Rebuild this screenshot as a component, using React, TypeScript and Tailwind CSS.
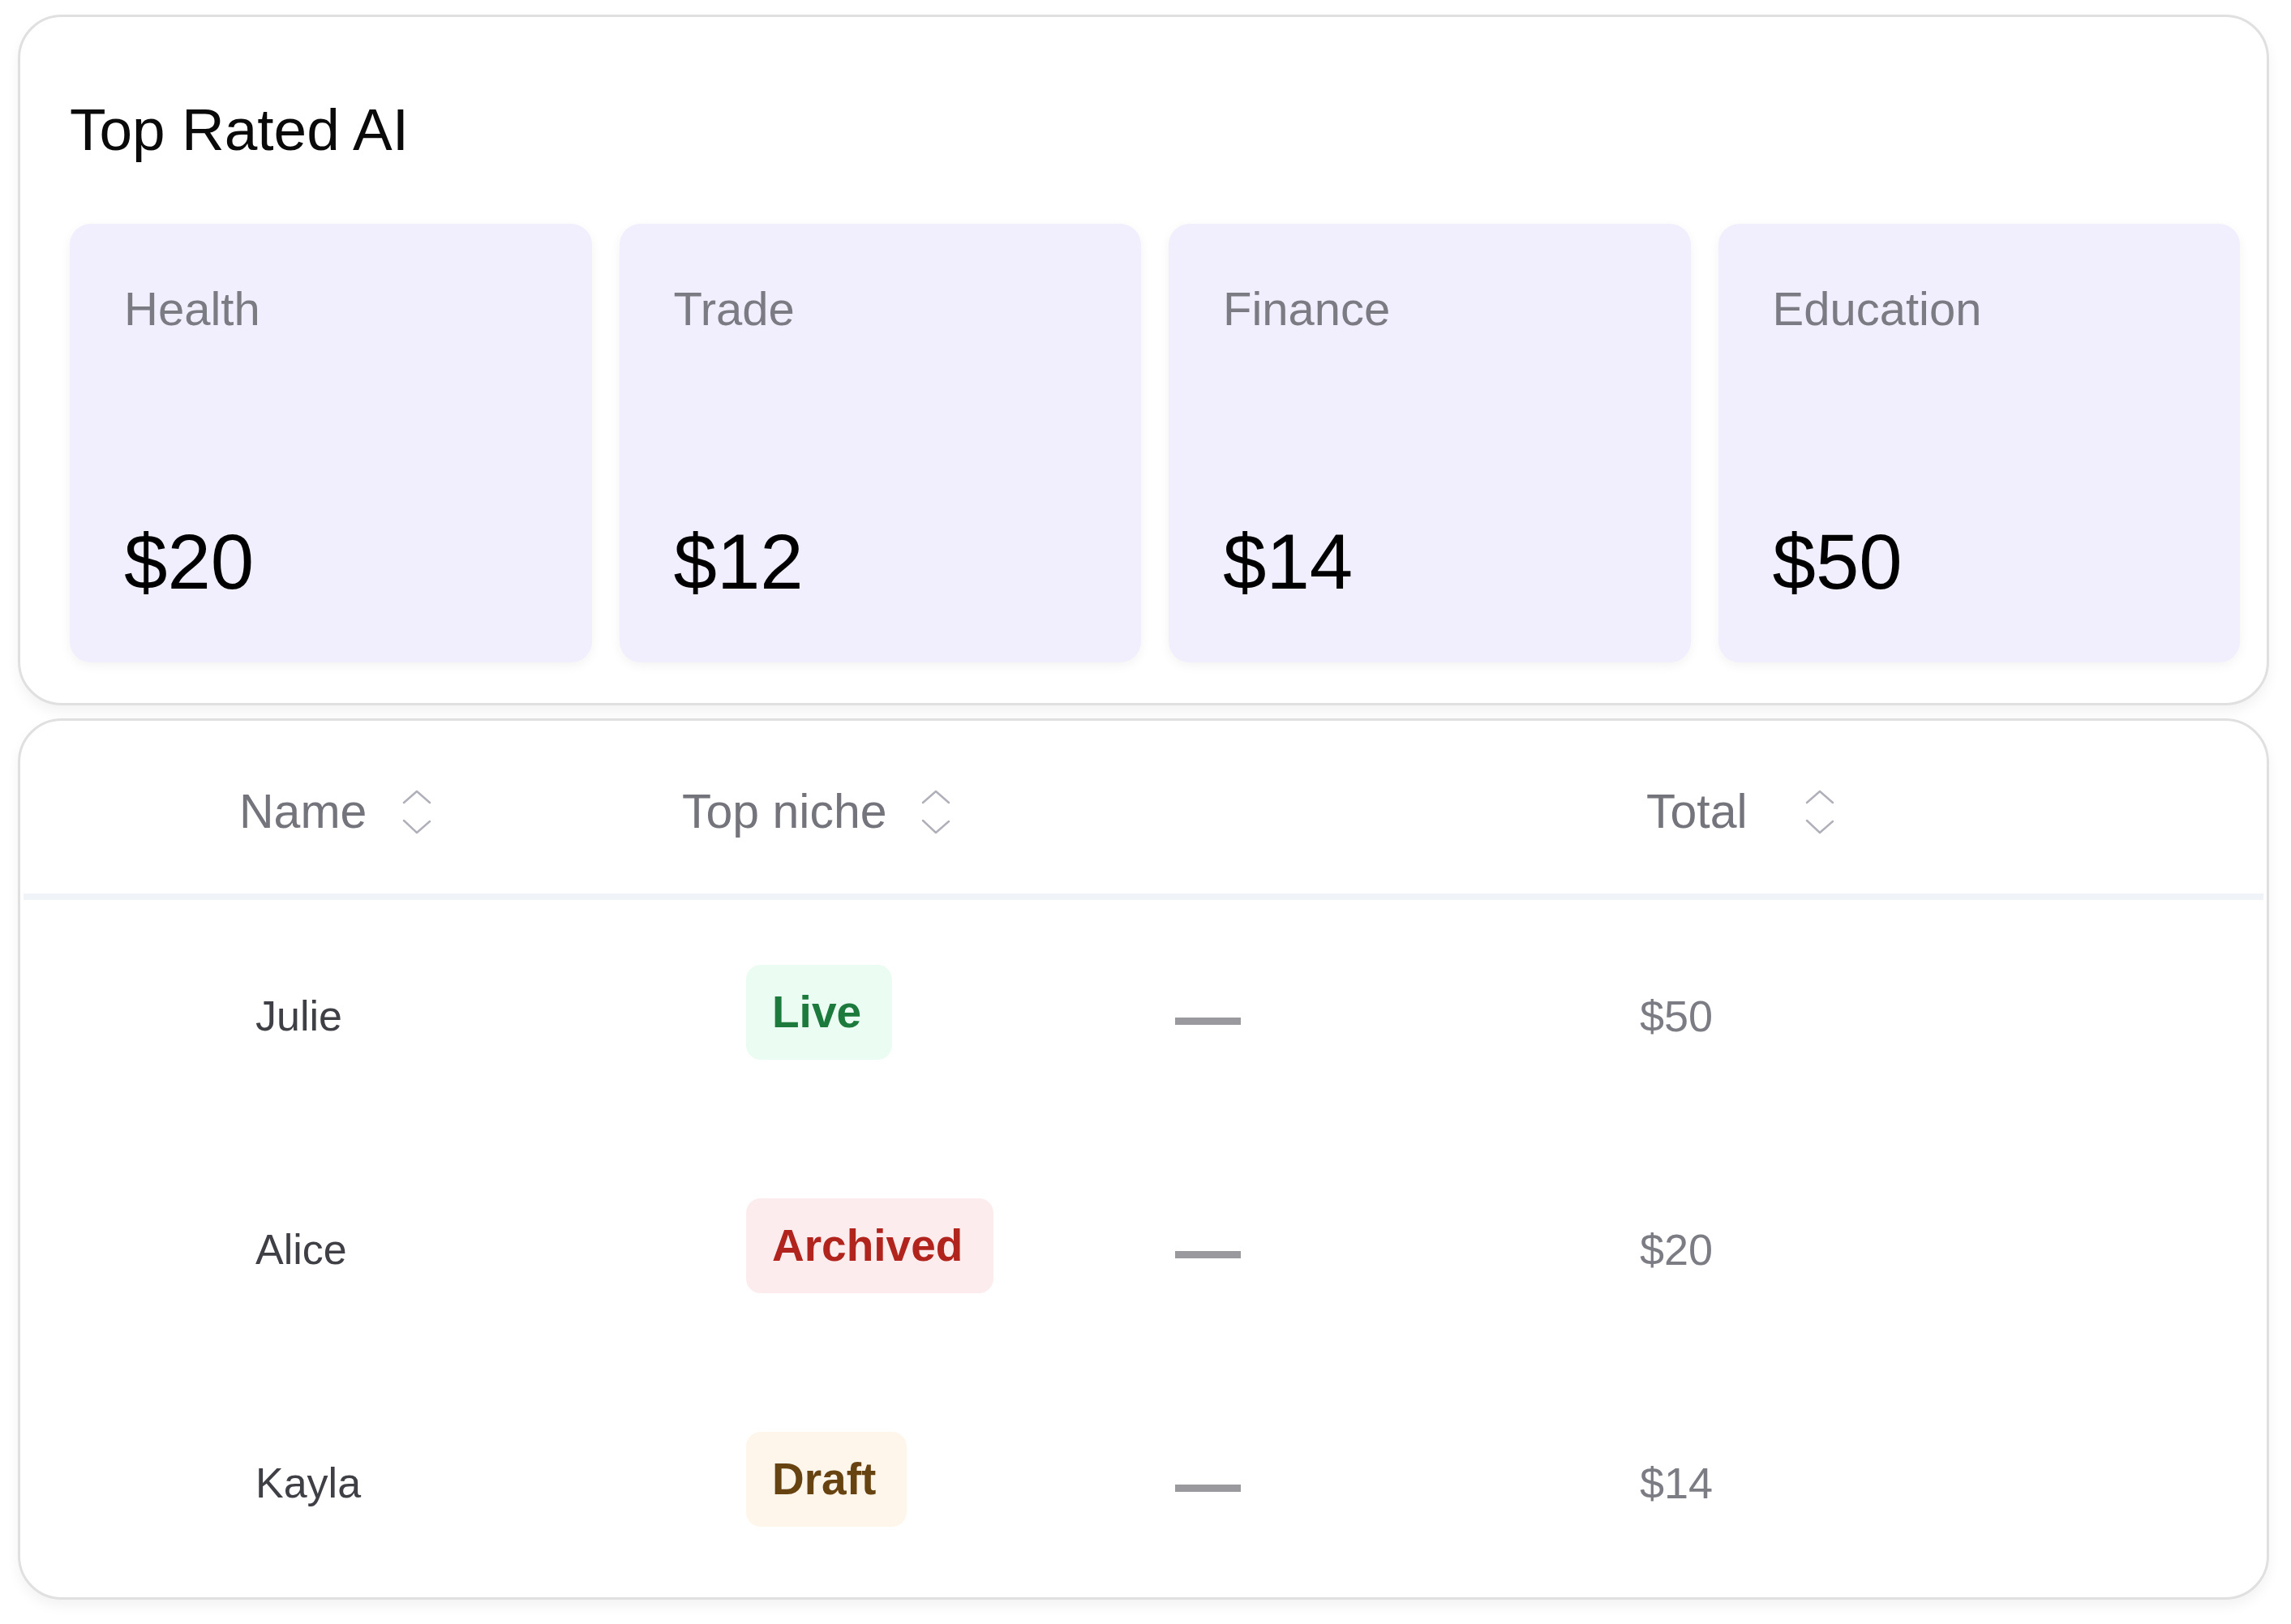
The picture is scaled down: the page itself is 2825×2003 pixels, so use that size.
import React from "react";

type Niche = { label: string; price: string };
type Row = { name: string; status: "Live" | "Archived" | "Draft"; total: string };

const niches: Niche[] = [
  { label: "Health", price: "$20" },
  { label: "Trade", price: "$12" },
  { label: "Finance", price: "$14" },
  { label: "Education", price: "$50" },
];

const rows: Row[] = [
  { name: "Julie", status: "Live", total: "$50" },
  { name: "Alice", status: "Archived", total: "$20" },
  { name: "Kayla", status: "Draft", total: "$14" },
];

const badgeStyles: Record<Row["status"], string> = {
  Live: "bg-[#ebfdf2] text-[#1d7a3d]",
  Archived: "bg-[#fdecee] text-[#b1241d]",
  Draft: "bg-[#fef6ea] text-[#684312]",
};

const SortIcon = () => (
  <svg width="38" height="56" viewBox="0 0 38 56" fill="none">
    <path
      d="M3 16 L19 2 L35 16"
      stroke="#b0b0ba"
      strokeWidth="2.5"
      strokeLinecap="round"
      strokeLinejoin="round"
    />
    <path
      d="M3 38 L19 53 L35 39"
      stroke="#b0b0ba"
      strokeWidth="2.5"
      strokeLinecap="round"
      strokeLinejoin="round"
    />
  </svg>
);

const HeaderCell = ({ title, gap }: { title: string; gap: string }) => (
  <div className="flex items-center">
    <span className="text-[59px] leading-none text-[#74747c]">{title}</span>
    <span className={gap}>
      <SortIcon />
    </span>
  </div>
);

const App = () => {
  return (
    <div className="min-h-screen bg-white pl-[22px] pt-[18px] font-['Liberation_Sans',Arial,sans-serif]">
      <div className="flex w-[2776px] flex-col gap-[16px]">
        {/* top rated */}
        <section className="rounded-[54px] border-[3px] border-[#e0e0e0] bg-white pb-[50px] pl-[61px] pr-[33px] pt-[102px] shadow-[0_8px_16px_rgba(0,0,0,0.05)]">
          <h1 className="text-[73px] leading-none text-[#0a0a0a]">Top Rated AI</h1>
          <div className="mt-[80px] grid grid-cols-4 gap-[34px]">
            {niches.map((n) => (
              <div
                key={n.label}
                className="flex h-[541px] flex-col justify-between rounded-[26px] bg-[#f1eefd] pb-[76px] pl-[67px] pt-[76px] shadow-[0_4px_14px_rgba(0,0,0,0.05)]"
              >
                <span className="text-[58px] leading-none text-[#7b7b83]">{n.label}</span>
                <span className="text-[96px] leading-none text-black">{n.price}</span>
              </div>
            ))}
          </div>
        </section>

        {/* table */}
        <section className="h-[1087px] overflow-hidden rounded-[54px] border-[3px] border-[#e0e0e0] bg-white shadow-[0_8px_16px_rgba(0,0,0,0.05)]">
          <div className="grid h-[213px] grid-cols-[546px_1189px_1fr] items-center pl-[270px] pt-[12px]">
            <HeaderCell title="Name" gap="ml-[43px]" />
            <HeaderCell title="Top niche" gap="ml-[41px]" />
            <HeaderCell title="Total" gap="ml-[70px]" />
          </div>
          <div className="mx-[4px] h-[8px] bg-[#f0f3f8]" />
          {rows.map((r) => (
            <div
              key={r.name}
              className="grid h-[288px] grid-cols-[606px_528px_573px_1fr] items-center pb-[12px] pl-[290px]"
            >
              <span className="pt-[10px] text-[52px] leading-none text-[#3f3f46]">{r.name}</span>
              <div className="-ml-[1px]">
                <span
                  className={`inline-flex h-[117px] items-center rounded-[18px] pl-[32px] pr-[38px] text-[55px] font-bold leading-none ${badgeStyles[r.status]}`}
                >
                  {r.status}
                </span>
              </div>
              <div className="mt-[22px] h-[9px] w-[81px] bg-[#9a9a9e]" />
              <span className="pt-[10px] text-[54px] leading-none text-[#7c7c84]">{r.total}</span>
            </div>
          ))}
        </section>
      </div>
    </div>
  );
};

export default App;
